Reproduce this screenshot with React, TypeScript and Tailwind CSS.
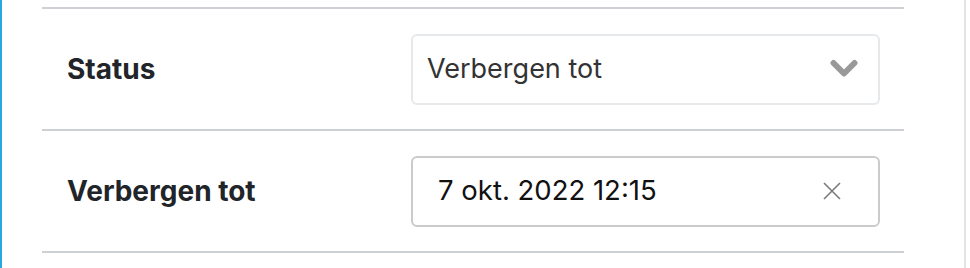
import React from 'react';

function Chevron() {
  return (
    <svg width="28" height="20" viewBox="0 0 28 20" fill="none">
      <polyline
        points="3.5,4 14,14.5 24.5,4"
        stroke="#999999"
        strokeWidth="6"
        strokeLinecap="round"
        strokeLinejoin="round"
      />
    </svg>
  );
}

function Cross() {
  return (
    <svg width="18" height="18" viewBox="0 0 18 18" fill="none">
      <path d="M1 1L17 17M17 1L1 17" stroke="#7a7a7a" strokeWidth="1.6" />
    </svg>
  );
}

function Row({ label, children }: { label: string; children: React.ReactNode }) {
  return (
    <div className="flex h-[122px] items-center border-b-2 border-[#cdd1d5]">
      <div className="w-[369px] pl-[25px] text-[28px] font-bold text-[#212529]">{label}</div>
      <div className="flex-1 pr-[24px]">{children}</div>
    </div>
  );
}

export default function App() {
  return (
    <div
      className="flex h-[268px] w-[970px] bg-white"
      style={{ fontFamily: 'Inter, "Noto Sans", sans-serif' }}
    >
      <div className="w-[2px] bg-[#29a9e1]" />
      <div className="w-[40px]" />
      <div className="w-[862px] pt-[7px]">
        <div className="border-t-2 border-[#cdd1d5]">
          <Row label="Status">
            <div className="flex h-[71px] items-center justify-between rounded-[6px] border-2 border-[#e6e9ec] pl-[14px] pr-[20px] text-[27px] text-[#333333]">
              <span>Verbergen tot</span>
              <Chevron />
            </div>
          </Row>
          <Row label="Verbergen tot">
            <div className="flex h-[71px] items-center justify-between rounded-[6px] border-2 border-[#cbcbcb] pl-[25px] pr-[37px] text-[27.5px] text-[#111111]">
              <span>7 okt. 2022 12:15</span>
              <Cross />
            </div>
          </Row>
        </div>
      </div>
      <div className="w-[60px]" />
      <div className="w-[2px] bg-[#e1e3e6]" />
    </div>
  );
}
